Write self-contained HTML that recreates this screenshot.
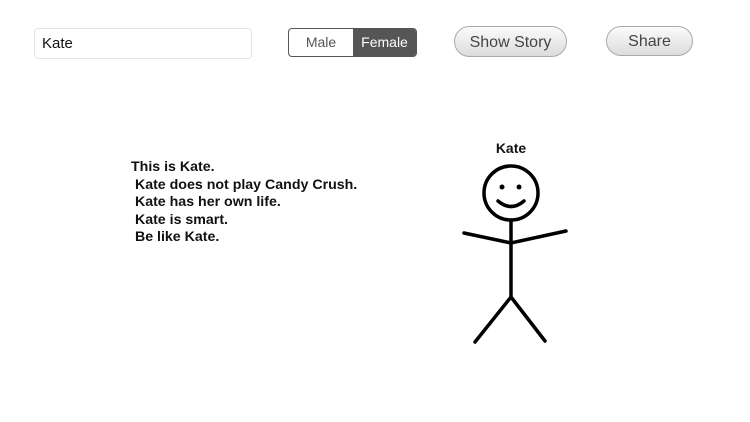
<!DOCTYPE html>
<html><head><style>
body{margin:0;width:750px;height:422px;background:#fff;font-family:"Liberation Sans",sans-serif;position:relative;overflow:hidden}
.a{position:absolute}
.tb{left:34px;top:28px;border:1px solid #e6e6e6;border-radius:4px;font-size:15px;line-height:30px;box-sizing:border-box;padding-left:7px;width:218px;height:31px;color:#111}
.seg{left:288px;top:28px;width:129px;height:29px;border:1px solid #555;border-radius:4px;box-sizing:border-box;display:flex;overflow:hidden;font-size:14px}
.seg div{flex:0 0 64px;text-align:center;line-height:27px;color:#555}
.seg div.on{flex:1;background:#555;color:#fff}
.btn{border:1px solid #aaa;border-radius:16px;background:linear-gradient(#fbfbfb,#dcdcdc);box-sizing:border-box;text-align:center;color:#444;font-size:16px}
.story{left:131px;top:159px;font-size:14.2px;font-weight:bold;line-height:17.5px;color:#111;white-space:pre}
</style></head><body>
<div class="a tb">Kate</div>
<div class="a seg"><div>Male</div><div class="on">Female</div></div>
<div class="a btn" style="left:454px;top:26px;width:113px;height:31px;line-height:31px">Show Story</div>
<div class="a btn" style="left:606px;top:26px;width:87px;height:30px;line-height:30px">Share</div>
<div class="a story">This is Kate.
 Kate does not play Candy Crush.
 Kate has her own life.
 Kate is smart.
 Be like Kate.</div>
<div class="a" style="left:471px;top:140px;width:80px;text-align:center;font-size:14px;font-weight:bold;color:#111">Kate</div>
<svg class="a" style="left:0;top:0" width="750" height="422">
<g stroke="#000" stroke-width="3.5" fill="none" stroke-linecap="round">
<circle cx="511" cy="193" r="27"/>
<path d="M498 201 Q511 212 524 201"/>
<path d="M511 220 L511 297 M464 233 L511 243 L566 231 M511 297 L475 342 M511 297 L545 341"/>
</g>
<circle cx="502" cy="187" r="2.5"/><circle cx="519" cy="187" r="2.5"/>
</svg>
</body></html>
